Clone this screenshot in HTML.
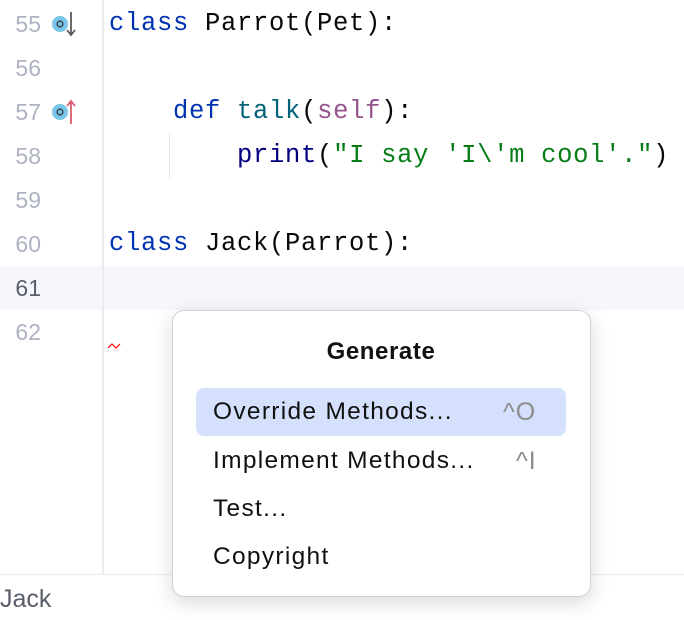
<!DOCTYPE html>
<html><head><style>
body{margin:0;width:684px;height:620px;overflow:hidden;background:#fff;position:relative;font-family:"Liberation Sans",sans-serif}
.ln{position:absolute;left:0;width:41px;text-align:right;font-family:"Liberation Sans",sans-serif;font-size:23px;color:#aeb3c2;line-height:44px}
.code{position:absolute;left:109px;font-family:"Liberation Mono",monospace;font-size:25.5px;letter-spacing:0.7px;line-height:44px;white-space:pre;color:#080808}
.k{color:#0033b3}.f{color:#00627a}.s{color:#94558d}.str{color:#067d17}.p{color:#000080}
.item{position:absolute;left:213px;font-size:24.5px;letter-spacing:1.3px;color:#111;line-height:48px}
.sc{position:absolute;font-size:25px;letter-spacing:1px;color:#8c8c8c;line-height:48px}
</style></head><body>
<div style="position:absolute;left:0;top:266px;width:684px;height:44px;background:#f5f7fd"></div>
<div style="position:absolute;left:102px;top:0;width:2px;height:575px;background:#ebecf0"></div>
<div style="position:absolute;left:169px;top:134px;width:1px;height:44px;background:#e6e6e6"></div>
<div style="position:absolute;left:0;top:574px;width:684px;height:1px;background:#ebecf0"></div>
<div class="ln" style="top:2px">55</div>
<div class="ln" style="top:46px">56</div>
<div class="ln" style="top:90px">57</div>
<div class="ln" style="top:134px">58</div>
<div class="ln" style="top:178px">59</div>
<div class="ln" style="top:222px">60</div>
<div class="ln" style="top:266px;color:#5a5d6b">61</div>
<div class="ln" style="top:310px">62</div>
<svg style="position:absolute;left:50px;top:12px" width="30" height="120">
<circle cx="10" cy="12" r="8" fill="#79c7e8"/><circle cx="10" cy="12" r="2.8" fill="none" stroke="#3d4a5a" stroke-width="1.6"/>
<path d="M21 0v22M17 18l4 5 4-5" stroke="#5b5b5b" stroke-width="1.8" fill="none"/>
<circle cx="10" cy="100" r="8" fill="#79c7e8"/><circle cx="10" cy="100" r="2.8" fill="none" stroke="#3d4a5a" stroke-width="1.6"/>
<path d="M21 112v-22M17 94l4-5 4 5" stroke="#db5c6e" stroke-width="1.8" fill="none"/>
</svg>
<div class="code" style="top:2px"><span class="k">class</span> Parrot(Pet):</div>
<div class="code" style="top:90px">    <span class="k">def</span> <span class="f">talk</span>(<span class="s">self</span>):</div>
<div class="code" style="top:134px">        <span class="p">print</span>(<span class="str">"I say 'I\'m cool'."</span>)</div>
<div class="code" style="top:222px"><span class="k">class</span> Jack(Parrot):</div>
<svg style="position:absolute;left:107px;top:342px" width="18" height="8"><path d="M1 6l4-4 4 4 4-4" stroke="#f00" stroke-width="1.2" fill="none"/></svg>
<div style="position:absolute;left:0;top:582px;font-size:25px;color:#5a5d6b;line-height:34px">Jack</div>
<div style="position:absolute;left:172px;top:310px;width:417px;height:285px;background:#fff;border:1px solid #d0d2d8;border-radius:12px;box-shadow:0 6px 20px rgba(0,0,0,0.15)"></div>
<div style="position:absolute;left:172px;width:418px;top:330px;text-align:center;font-weight:bold;font-size:24px;letter-spacing:0.6px;line-height:44px;color:#111">Generate</div>
<div style="position:absolute;left:196px;top:388px;width:370px;height:48px;background:#d4e0fc;border-radius:8px"></div>
<div class="item" style="top:388px">Override Methods...</div>
<div class="sc" style="top:388px;left:503px">^O</div>
<div class="item" style="top:437px">Implement Methods...</div>
<div class="sc" style="top:437px;left:516px">^I</div>
<div class="item" style="top:485px">Test...</div>
<div class="item" style="top:533px">Copyright</div>
</body></html>
